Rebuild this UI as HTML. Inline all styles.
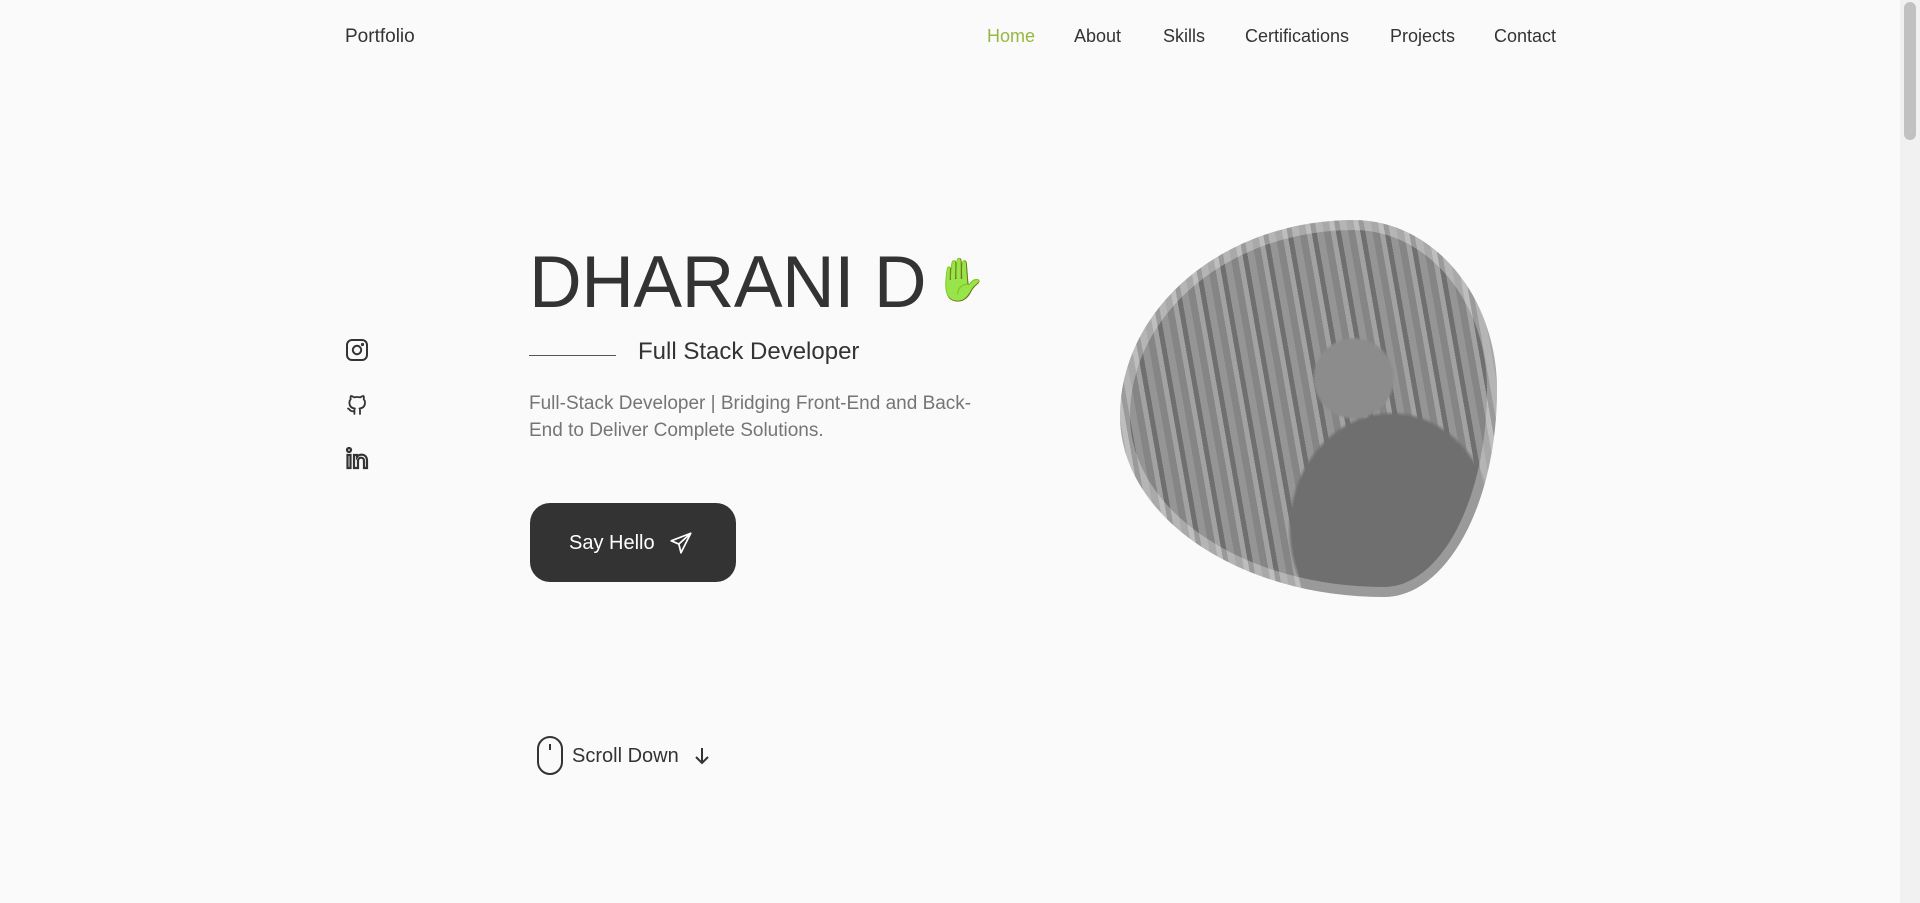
<!DOCTYPE html>
<html><head><meta charset="utf-8"><style>
*{margin:0;padding:0;box-sizing:border-box}
html,body{width:1920px;height:903px;overflow:hidden;background:#fafafa;font-family:"Liberation Sans",sans-serif;color:#333}
.abs{position:absolute}
.nav a{position:absolute;top:26px;font-size:18px;color:#333;text-decoration:none}
.sb{position:absolute;right:0;top:0;width:20px;height:903px;background:#f1f1f1}
.sb div{position:absolute;left:4px;top:2px;width:12px;height:138px;background:#c1c1c1;border-radius:6px}
.blob{position:absolute;left:1120px;top:220px;width:377px;height:377px;border-radius:62% 38% 30% 70% / 52% 45% 55% 48%;
background:radial-gradient(circle at 62% 42%,#8c8c8c 0 12%,transparent 13%),radial-gradient(ellipse at 72% 82%,#6f6f6f 0 26%,transparent 27%),repeating-linear-gradient(80deg,#858585 0 7px,#a2a2a2 7px 12px,#6f6f6f 12px 17px,#959595 17px 24px),#888;
box-shadow:inset 0 0 0 10px rgba(255,255,255,.3)}
</style></head><body>
<div class="nav">
<a style="left:345px;font-size:19px">Portfolio</a>
<a style="left:987px;color:#95b83f">Home</a>
<a style="left:1074px">About</a>
<a style="left:1163px">Skills</a>
<a style="left:1245px">Certifications</a>
<a style="left:1390px">Projects</a>
<a style="left:1494px">Contact</a>
</div>
<div class="abs" style="left:345px;top:338px">
<svg width="24" height="24" viewBox="0 0 24 24" fill="none" stroke="#333" stroke-width="2"><rect x="2" y="2" width="20" height="20" rx="5"/><circle cx="12" cy="12" r="4.2"/><circle cx="17.5" cy="6.5" r=".6" fill="#333"/></svg></div>
<div class="abs" style="left:345px;top:392px">
<svg width="24" height="24" viewBox="0 0 24 24" fill="none" stroke="#333" stroke-width="1.8" stroke-linejoin="round" stroke-linecap="round"><path d="M9 19c-4 1.3-4-2-6-2.5M15 22v-3.5c0-1 .1-1.4-.5-2 2.8-.3 5.5-1.4 5.5-6a4.6 4.6 0 0 0-1.3-3.2 4.2 4.2 0 0 0-.1-3.2s-1-.3-3.4 1.3a11.6 11.6 0 0 0-6 0C6.8 3.8 5.8 4.1 5.8 4.1a4.2 4.2 0 0 0-.1 3.2A4.6 4.6 0 0 0 4.4 10.5c0 4.6 2.7 5.7 5.5 6-.6.6-.6 1.2-.5 2V22"/></svg></div>
<div class="abs" style="left:345px;top:446px">
<svg width="25" height="24" viewBox="0 0 25 24" fill="none" stroke="#333" stroke-width="2.2"><circle cx="4" cy="4" r="2"/><path d="M2.5 9h3v13h-3zM9 22V9h3v2c1-1.5 2.5-2.3 4.5-2.3 3.5 0 5.5 2.3 5.5 6V22h-3v-7c0-2-1-3.3-2.8-3.3S13 13 13 15v7z"/></svg></div>

<div class="abs" style="left:529px;top:241px;font-size:73px;letter-spacing:-0.5px;white-space:nowrap">DHARANI D</div>
<div class="abs" style="left:934px;top:256px;font-size:42px;filter:hue-rotate(40deg) saturate(.8)">✋</div>
<div class="abs" style="left:529px;top:355px;width:87px;height:1px;background:#555"></div>
<div class="abs" style="left:638px;top:338px;font-size:24px">Full Stack Developer</div>
<div class="abs" style="left:529px;top:390px;width:468px;font-size:19px;line-height:27px;color:#757575">Full-Stack Developer | Bridging Front-End and Back-End to Deliver Complete Solutions.</div>
<div class="abs" style="left:530px;top:503px;width:206px;height:79px;background:#333;border-radius:20px;color:#fff;font-size:20px">
<span class="abs" style="left:39px;top:29px">Say Hello</span>
<svg class="abs" style="left:138px;top:27px" width="26" height="26" viewBox="0 0 24 24" fill="none" stroke="#fff" stroke-width="1.6" stroke-linejoin="round"><path d="M21 3 3 10l7 3 2 8z"/><path d="M10 13l11-10"/></svg>
</div>
<div class="blob"></div>
<svg class="abs" style="left:536px;top:735px" width="28" height="41" viewBox="0 0 28 41" fill="none" stroke="#333" stroke-width="2"><rect x="2" y="2" width="24" height="37" rx="12"/><path d="M14 9v6"/></svg>
<div class="abs" style="left:572px;top:745px;font-size:20px">Scroll Down</div>
<svg class="abs" style="left:694px;top:747px" width="16" height="18" viewBox="0 0 16 18" fill="none" stroke="#333" stroke-width="2"><path d="M8 1v15M2 10l6 6 6-6"/></svg>
<div class="sb"><div></div></div>
</body></html>
